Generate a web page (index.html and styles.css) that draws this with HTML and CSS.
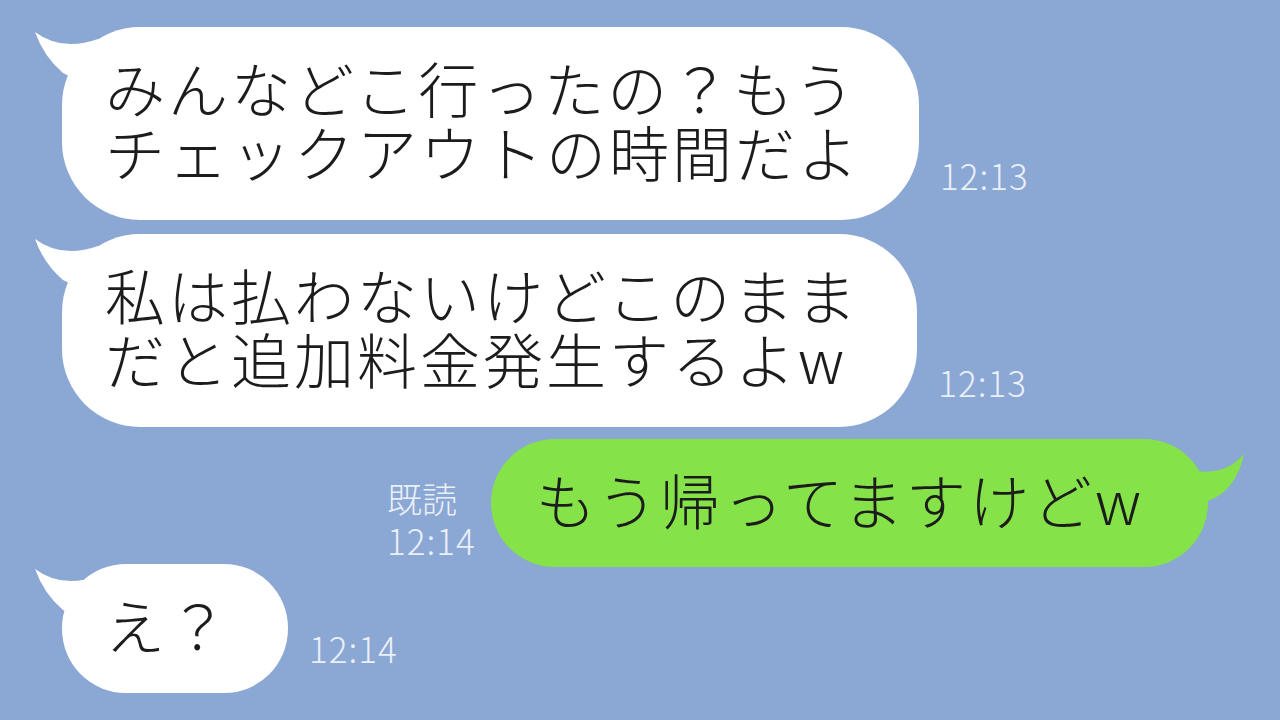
FILE: index.html
```html
<!DOCTYPE html>
<html lang="ja">
<head>
<meta charset="utf-8">
<link rel="stylesheet" href="styles.css">
</head>
<body>
<main class="chat">
  <div class="row row-left row-1">
    <div class="bubble bubble-white">
      <svg class="tail tail-left" viewBox="0 0 80 70" width="80" height="70"><path d="M3,5 Q30,25 66,12 L72,66 L31,46 Q12,30 3,5 Z"/></svg>
      <p class="msg">みんなどこ行ったの？もう<br>チェックアウトの時間だよ</p>
    </div>
    <div class="meta"><span class="time">12:13</span></div>
  </div>
  <div class="row row-left row-2">
    <div class="bubble bubble-white">
      <svg class="tail tail-left" viewBox="0 0 80 70" width="80" height="70"><path d="M3,5 Q30,25 66,12 L72,66 L31,46 Q12,30 3,5 Z"/></svg>
      <p class="msg">私は払わないけどこのまま<br>だと追加料金発生するよw</p>
    </div>
    <div class="meta"><span class="time">12:13</span></div>
  </div>
  <div class="row row-right row-3">
    <div class="meta meta-read"><span class="read">既読</span><span class="time">12:14</span></div>
    <div class="bubble bubble-green">
      <svg class="tail tail-right" viewBox="0 0 80 80" width="80" height="80"><path d="M76,15 Q58,36 29,32 L8,40 L8,74 L40,62 Q68,52 76,15 Z"/></svg>
      <p class="msg">もう帰ってますけどw</p>
    </div>
  </div>
  <div class="row row-left row-4">
    <div class="bubble bubble-white bubble-short">
      <svg class="tail tail-left" viewBox="0 0 80 70" width="80" height="70"><path d="M3,5 Q30,25 66,12 L72,66 L31,46 Q12,30 3,5 Z"/></svg>
      <p class="msg">え？</p>
    </div>
    <div class="meta"><span class="time">12:14</span></div>
  </div>
</main>
</body>
</html>
```

FILE: styles.css
```css
* { box-sizing: border-box; }
html, body {
  margin: 0;
  padding: 0;
  width: 1280px;
  height: 720px;
  overflow: hidden;
  background: #8ba7d3;
}
.chat {
  display: flex;
  flex-direction: column;
  padding-top: 27px;
  font-family: "Noto Sans CJK JP", "Noto Sans", sans-serif;
}
.row {
  display: flex;
  align-items: flex-end;
}
.row-left { padding-left: 62px; }
.row-right { justify-content: flex-end; padding-right: 72px; }
.row-2 { margin-top: 14px; }
.row-3 { margin-top: 12px; }
.row-4 { margin-top: -3px; }

.bubble {
  position: relative;
  border-radius: 78px;
  padding: 28px 58px 37px 43px;
}
.bubble-white { background: #ffffff; fill: #ffffff; }
.bubble-green { background: #85e249; fill: #85e249; border-radius: 64px; padding: 28px 64px 36px 45px; }
.bubble-short { border-radius: 64px / 64px; padding-right: 57px; }

.tail {
  position: absolute;
  display: block;
}
.tail-left { left: -30px; top: 0; }
.tail-right { right: -40px; top: 0; }
.tail path { fill: inherit; }

.msg {
  position: relative;
  margin: 0;
  font-size: 60px;
  line-height: 64px;
  font-weight: 300;
  letter-spacing: 3px;
  color: #1c1c1c;
  white-space: nowrap;
}

.meta {
  display: flex;
  flex-direction: column;
  margin-left: 21px;
  margin-bottom: 24px;
  color: #eaf0f9;
  font-size: 35px;
  line-height: 42px;
  font-weight: 300;
}
.meta-read {
  margin-left: 0;
  margin-right: 15px;
  margin-bottom: 6px;
}
.time { letter-spacing: 1px; }
.read { letter-spacing: 0; }
```
